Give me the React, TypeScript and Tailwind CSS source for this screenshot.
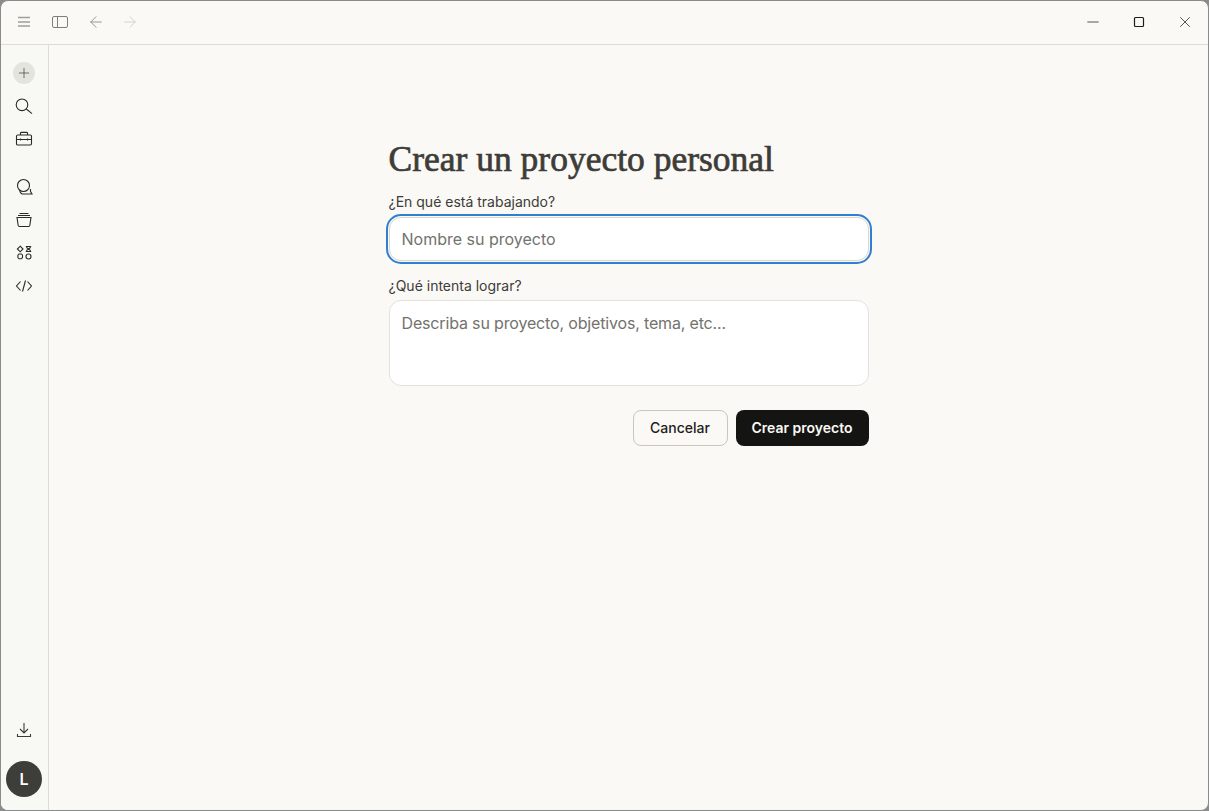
import { ArrowLeft, ArrowRight, Minus, Plus, X } from 'lucide-react'

const sans = "font-['Inter','Liberation_Sans',sans-serif]"

const IconBase = ({ children, className = '' }: { children: React.ReactNode; className?: string }) => (
  <svg width="18" height="18" viewBox="0 0 18 18" fill="none" stroke="currentColor" strokeWidth="1.1" className={className}>
    {children}
  </svg>
)

const SideButton = ({ children }: { children: React.ReactNode }) => (
  <button className="flex h-[33px] w-[33px] items-center justify-center text-[#2b2a27]">{children}</button>
)

export default function App() {
  return (
    <div className="h-[811px] w-[1209px] bg-[#8a8c8b]">
      <div className={`flex h-full w-full flex-col overflow-hidden rounded-lg border border-[#8a8c8b] bg-[#faf9f5] ${sans}`}>
        {/* Title bar */}
        <header className="flex h-[44px] shrink-0 items-center border-b border-[#dedcd5] pb-px pl-[14px]">
          <svg width="18" height="18" viewBox="0 0 18 18" fill="none" stroke="#a09f9a" strokeWidth="1.5">
            <path d="M3 4.500h12M3 9h12M3 13h12" />
          </svg>
          <svg width="18" height="14" viewBox="0 0 18 14" fill="none" stroke="#7f7e79" strokeWidth="1" className="ml-[18px]">
            <rect x="1.5" y="1.5" width="15" height="11" rx="1.5" />
            <path d="M6.500 1.500v11" />
          </svg>
          <ArrowLeft size={18} strokeWidth={1.2} className="ml-[18px] text-[#8f8e89]" />
          <ArrowRight size={18} strokeWidth={1.2} className="ml-[16px] text-[#cfcec9]" />
          <div className="ml-auto flex items-center gap-[28px] pr-[14px] text-[#1d1d1b]">
            <Minus size={18} strokeWidth={1} />
            <svg width="18" height="18" viewBox="0 0 18 18" fill="none" stroke="currentColor" strokeWidth="1.2">
              <rect x="4.500" y="4.500" width="9" height="9" rx="1" />
            </svg>
            <X size={18} strokeWidth={1} />
          </div>
        </header>

        <div className="flex min-h-0 flex-1">
          {/* Sidebar */}
          <aside className="flex w-[48px] shrink-0 flex-col items-center border-r border-[#dedcd5] bg-[#f8f8f4] pt-[17px] pr-px pb-[13px]">
            <button className="flex h-[22px] w-[22px] items-center justify-center rounded-full bg-[#e4e4de] text-[#5c5b57]">
              <Plus size={16} strokeWidth={1.3} />
            </button>
            <div className="mt-[5px] flex flex-col items-center">
              <SideButton>
                <IconBase>
                  <circle cx="7" cy="7.800" r="5.800" />
                  <path d="M11.300 12 17 16.700" />
                </IconBase>
              </SideButton>
              <SideButton>
                <IconBase>
                  <rect x="1.500" y="5" width="15" height="10" rx="1.200" />
                  <path d="M5.500 5V3.200c0-.5.300-.8.800-.8h5.400c.5 0 .8.300.8.800V5M1.500 9.500h15M5.500 8.500v2M12.500 8.500v2" />
                </IconBase>
              </SideButton>
            </div>
            <div className="mt-[15px] flex flex-col items-center">
              <SideButton>
                <IconBase>
                  <circle cx="8.500" cy="7.500" r="6" />
                  <path d="M4.500 12c.3 2 1.200 3.300 2.500 4h10l-1.500-2.500V11" />
                </IconBase>
              </SideButton>
              <SideButton>
                <IconBase>
                  <path d="M4.500 2.500h9M3 4.500h12M2 6.500h14l-1.200 8c-.1.5-.4 1-1 1H4.200c-.6 0-.9-.5-1-1z" />
                </IconBase>
              </SideButton>
              <SideButton>
                <svg width="18" height="18" viewBox="0 0 18 18" fill="none" stroke="currentColor" strokeWidth="1.100">
                  <path d="M5.200 2.200 8 5 5.200 7.800 2.400 5z" />
                  <path d="M10.800 2.500h5.400M10.800 7.500h5.400M11.800 2.500v1.200L13.500 5l-1.700 1.300v1.200M15.200 2.500v1.200L13.500 5l1.700 1.300v1.200" />
                  <path d="M4 10h2.400l1.100 1.200v2.300l-1.100 1.300H4l-1.100-1.300v-2.300z" />
                  <circle cx="13.500" cy="12.500" r="2.500" />
                </svg>
              </SideButton>
              <SideButton>
                <IconBase>
                  <path d="M5.500 4.500 1.500 9l4 4.500M12.500 4.500l4 4.500-4 4.500M10.500 3.500l-3 11" />
                </IconBase>
              </SideButton>
            </div>
            <div className="mt-auto flex flex-col items-center">
              <IconBase className="text-[#3b3a37]">
                <path d="M9 2v10M5 8l4 4 4-4M2.500 13v2.500h13V13" />
              </IconBase>
              <div className="mt-[22px] flex h-[36px] w-[36px] items-center justify-center rounded-full bg-[#3d3d3a] text-[16px] font-semibold text-white">
                L
              </div>
            </div>
          </aside>

          {/* Main */}
          <main className="flex flex-1 justify-center pt-[94px]">
            <div className="w-[480px]">
              <h1 className="font-['Liberation_Serif',serif] text-[35.5px] leading-[40px] font-normal text-[#3d3c38] [-webkit-text-stroke:0.7px_#3d3c38]">
                Crear un proyecto personal
              </h1>
              <label className="mt-[14px] block text-[14px] leading-[18px] text-[#3d3c38]">¿En qué está trabajando?</label>
              <input
                placeholder="Nombre su proyecto"
                className="mt-[6px] block h-[44px] w-full rounded-xl border border-[#d9d7d0] bg-white px-[12px] text-[16px] text-[#3d3c38] outline-2 outline-offset-1 outline-[#2f7fd3] placeholder:text-[#73726d]"
              />
              <label className="mt-[16px] block text-[14px] leading-[18px] text-[#3d3c38]">¿Qué intenta lograr?</label>
              <textarea
                placeholder="Describa su proyecto, objetivos, tema, etc..."
                className="mt-[5px] block h-[86px] w-full resize-none rounded-xl border border-[#e3e1da] bg-white px-[12px] pt-[11px] pb-[12px] text-[16px] leading-[22px] tracking-[-0.16px] outline-none placeholder:text-[#73726d]"
              />
              <div className="mt-[24px] flex justify-end gap-[8px]">
                <button className="h-[36px] w-[95px] rounded-lg border border-[#c8c6bf] pb-[2px] text-[14px] font-medium text-[#1f1e1c]">
                  Cancelar
                </button>
                <button className="h-[36px] w-[133px] rounded-lg bg-[#141413] pb-[2px] text-[14px] font-semibold text-[#faf9f5]">
                  Crear proyecto
                </button>
              </div>
            </div>
          </main>
        </div>
      </div>
    </div>
  )
}
